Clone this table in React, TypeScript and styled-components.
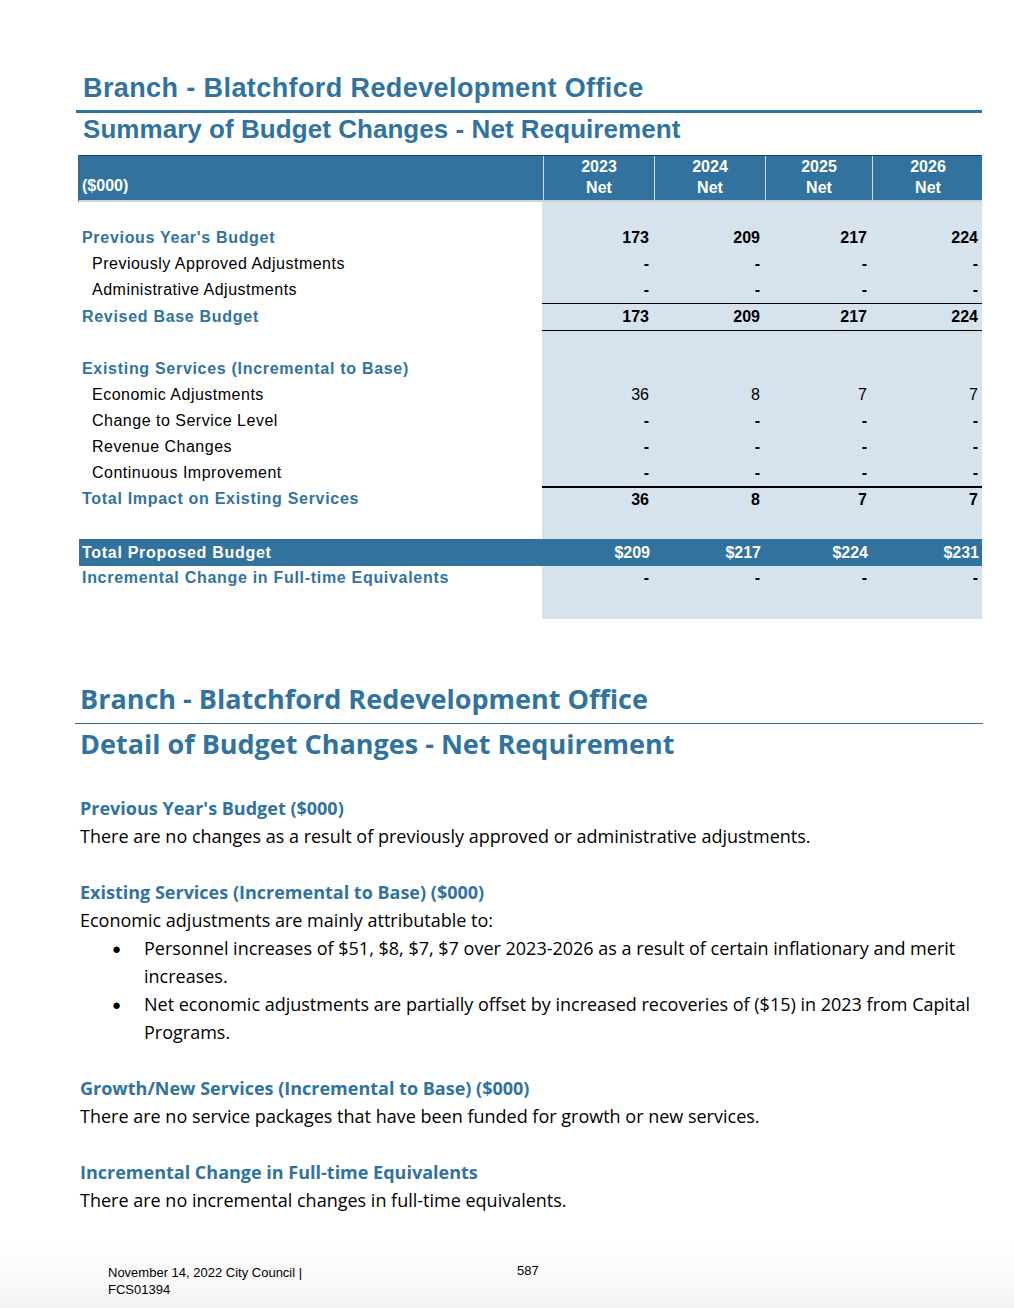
import React from 'react';
import styled, { createGlobalStyle } from 'styled-components';

const BLUE = '#30739F';
const HEAD_BLUE = '#31739E';
const LIGHT = '#D6E2EC';

const GlobalStyle = createGlobalStyle`
  html, body { margin: 0; padding: 0; background: #ffffff; }
  #root { width: 1014px; }
`;

const Page = styled.div`
  width: 1014px;
  min-height: 1308px;
  display: flex;
  flex-direction: column;
  background: #fff;
`;

/* ---------- Summary (Arial-like) ---------- */
const Summary = styled.section`
  margin: 71px 32px 0 76px;
  font-family: "Liberation Sans", Arial, sans-serif;
`;

const SumTitle = styled.h1`
  margin: 0;
  padding-left: 7px;
  font-size: 27px;
  line-height: 34px;
  font-weight: 700;
  letter-spacing: 0.4px;
  color: ${BLUE};
`;

const ThickRule = styled.div`
  height: 3px;
  background: ${BLUE};
  margin-top: 5px;
`;

const SumSubtitle = styled.h2`
  margin: 0;
  padding-left: 7px;
  font-size: 26px;
  line-height: 32px;
  font-weight: 700;
  letter-spacing: 0.05px;
  color: ${BLUE};
`;

const Table = styled.div`
  margin: 10px 0 0 2px;
  width: 904px;
`;

const COLS = '464px 111px 111px 107px 111px';

const HeaderRow = styled.div`
  display: grid;
  grid-template-columns: ${COLS};
  height: 44px;
  background: ${HEAD_BLUE};
  border-top: 1px solid #1c3f5c;
  border-left: 1px solid #3a5f7c;
  border-bottom: 2px solid #cdd3d8;
  color: #fff;
  font-weight: 700;
  font-size: 16px;
`;

const HeadLabel = styled.div`
  display: flex;
  align-items: flex-end;
  padding: 0 0 5px 3px;
  line-height: 18px;
`;

const HeadYear = styled.div`
  display: flex;
  flex-direction: column;
  align-items: center;
  justify-content: flex-start;
  border-left: 1px solid #cfdde8;
  line-height: 21px;
`;

const Row = styled.div<{ $h: number }>`
  display: grid;
  grid-template-columns: ${COLS};
  height: ${p => p.$h}px;
`;

const Label = styled.div<{ $kind: 'head' | 'item' | 'none'; $top?: boolean }>`
  display: flex;
  align-items: ${p => (p.$top ? 'flex-start' : 'center')};
  padding-left: ${p => (p.$kind === 'item' ? 14 : 4)}px;
  padding-top: ${p => (p.$top ? 3 : 0)}px;
  font-size: 16px;
  font-weight: ${p => (p.$kind === 'head' ? 700 : 400)};
  color: ${p => (p.$kind === 'head' ? BLUE : '#000')};
  letter-spacing: ${p => (p.$kind === 'head' ? '0.7px' : '0.5px')};
  white-space: nowrap;
`;

const Value = styled.div<{ $bold?: boolean; $top?: number; $bottom?: number; $alignTop?: boolean }>`
  display: flex;
  align-items: ${p => (p.$alignTop ? 'flex-start' : 'center')};
  justify-content: flex-end;
  padding-right: 4px;
  padding-top: ${p => (p.$alignTop ? 3 : 0)}px;
  background: ${LIGHT};
  font-size: 16px;
  font-weight: ${p => (p.$bold ? 700 : 400)};
  color: #000;
  border-top: ${p => (p.$top ? `${p.$top}px solid #000` : 'none')};
  border-bottom: ${p => (p.$bottom ? `${p.$bottom}px solid #000` : 'none')};
`;

const TotalRow = styled.div`
  display: grid;
  grid-template-columns: ${COLS};
  height: 27px;
  background: ${HEAD_BLUE};
  color: #fff;
  font-size: 16px;
  font-weight: 700;
  margin-left: 1px;
`;

const TotalLabel = styled.div`
  display: flex;
  align-items: center;
  padding-left: 3px;
  letter-spacing: 0.7px;
`;

const TotalValue = styled.div`
  display: flex;
  align-items: center;
  justify-content: flex-end;
  padding-right: 4px;
`;

/* ---------- Detail (Open Sans) ---------- */
const Detail = styled.section`
  margin: 62px 31px 0 75px;
  font-family: "Open Sans", "Noto Sans", sans-serif;
`;

const DetailTitle = styled.h1`
  margin: 0;
  padding-left: 5px;
  font-size: 27px;
  line-height: 36px;
  font-weight: 700;
  color: ${BLUE};
`;

const ThinRule = styled.div`
  height: 1px;
  background: ${BLUE};
  margin-top: 6px;
`;

const DetailSub = styled.h2`
  margin: 0;
  padding-left: 5px;
  font-size: 27px;
  line-height: 40px;
  font-weight: 700;
  color: ${BLUE};
`;

const Block = styled.div<{ $gap: number }>`
  margin-top: ${p => p.$gap}px;
  padding-left: 5px;
`;

const BlockHead = styled.h3`
  margin: 0;
  font-size: 18px;
  line-height: 28px;
  font-weight: 700;
  color: ${BLUE};
`;

const Para = styled.p`
  margin: 0;
  font-size: 18px;
  line-height: 28px;
  color: #000;
`;

const Bullets = styled.ul`
  margin: 0;
  padding: 0;
  list-style: none;
`;

const Bullet = styled.li`
  display: flex;
  font-size: 18px;
  line-height: 28px;
  color: #000;
  &::before {
    content: '●';
    flex: 0 0 64px;
    font-size: 15px;
    padding-left: 32px;
    box-sizing: border-box;
  }
`;

/* ---------- Footer ---------- */
const Footer = styled.footer`
  margin-top: auto;
  height: 70px;
  display: flex;
  padding: 0 0 0 108px;
  font-family: "Liberation Sans", Arial, sans-serif;
  font-size: 13px;
  line-height: 17px;
  color: #000;
  background: linear-gradient(to bottom, #ffffff 0%, #fbfbfb 50%, #f3f3f3 100%);
`;

const FooterLeft = styled.div`
  width: 409px;
  padding-top: 26px;
`;

const FooterPage = styled.div`
  padding-top: 24px;
`;

type R = { label: string; kind: 'head' | 'item'; vals: string[]; bold?: boolean; top?: number; bottom?: number };

const D = '-';

const App: React.FC = () => {
  const block1: R[] = [
    { label: "Previous Year's Budget", kind: 'head', vals: ['173', '209', '217', '224'], bold: true },
    { label: 'Previously Approved Adjustments', kind: 'item', vals: [D, D, D, D], bold: true },
    { label: 'Administrative Adjustments', kind: 'item', vals: [D, D, D, D], bold: true },
    { label: 'Revised Base Budget', kind: 'head', vals: ['173', '209', '217', '224'], bold: true, top: 1, bottom: 1 },
  ];
  const block2: R[] = [
    { label: 'Economic Adjustments', kind: 'item', vals: ['36', '8', '7', '7'] },
    { label: 'Change to Service Level', kind: 'item', vals: [D, D, D, D], bold: true },
    { label: 'Revenue Changes', kind: 'item', vals: [D, D, D, D], bold: true },
    { label: 'Continuous Improvement', kind: 'item', vals: [D, D, D, D], bold: true },
  ];

  const renderRow = (r: R, h = 26) => (
    <Row $h={h} key={r.label}>
      <Label $kind={r.kind}>{r.label}</Label>
      {r.vals.map((v, i) => (
        <Value key={i} $bold={r.bold} $top={r.top} $bottom={r.bottom}>
          {v}
        </Value>
      ))}
    </Row>
  );

  const blank = (h: number, k: string) => (
    <Row $h={h} key={k}>
      <Label $kind="none" />
      <Value />
      <Value />
      <Value />
      <Value />
    </Row>
  );

  return (
    <Page>
      <GlobalStyle />
      <Summary>
        <SumTitle>Branch - Blatchford Redevelopment Office</SumTitle>
        <ThickRule />
        <SumSubtitle>Summary of Budget Changes - Net Requirement</SumSubtitle>
        <Table>
          <HeaderRow>
            <HeadLabel>($000)</HeadLabel>
            {['2023', '2024', '2025', '2026'].map(y => (
              <HeadYear key={y}>
                <span>{y}</span>
                <span>Net</span>
              </HeadYear>
            ))}
          </HeaderRow>
          {blank(23, 'b0')}
          {block1.map(r => renderRow(r, r.top ? 28 : 26))}
          {blank(25, 'b1')}
          {renderRow({ label: 'Existing Services (Incremental to Base)', kind: 'head', vals: ['', '', '', ''] })}
          {block2.map(r => renderRow(r))}
          <Row $h={26}>
            <Label $kind="head">Total Impact on Existing Services</Label>
            {['36', '8', '7', '7'].map((v, i) => (
              <Value key={i} $bold $top={2}>
                {v}
              </Value>
            ))}
          </Row>
          {blank(27, 'b2')}
          <TotalRow>
            <TotalLabel>Total Proposed Budget</TotalLabel>
            {['$209', '$217', '$224', '$231'].map(v => (
              <TotalValue key={v}>{v}</TotalValue>
            ))}
          </TotalRow>
          <Row $h={53}>
            <Label $kind="head" $top>
              Incremental Change in Full-time Equivalents
            </Label>
            {[0, 1, 2, 3].map(i => (
              <Value key={i} $bold $alignTop>
                {D}
              </Value>
            ))}
          </Row>
        </Table>
      </Summary>

      <Detail>
        <DetailTitle>Branch - Blatchford Redevelopment Office</DetailTitle>
        <ThinRule />
        <DetailSub>Detail of Budget Changes - Net Requirement</DetailSub>

        <Block $gap={30}>
          <BlockHead>Previous Year's Budget ($000)</BlockHead>
          <Para>There are no changes as a result of previously approved or administrative adjustments.</Para>
        </Block>

        <Block $gap={28}>
          <BlockHead>Existing Services (Incremental to Base) ($000)</BlockHead>
          <Para>Economic adjustments are mainly attributable to:</Para>
          <Bullets>
            <Bullet>
              <span>
                Personnel increases of $51, $8, $7, $7 over 2023-2026 as a result of certain inflationary and merit
                increases.
              </span>
            </Bullet>
            <Bullet>
              <span>
                Net economic adjustments are partially offset by increased recoveries of ($15) in 2023 from Capital
                Programs.
              </span>
            </Bullet>
          </Bullets>
        </Block>

        <Block $gap={28}>
          <BlockHead>Growth/New Services (Incremental to Base) ($000)</BlockHead>
          <Para>There are no service packages that have been funded for growth or new services.</Para>
        </Block>

        <Block $gap={28}>
          <BlockHead>Incremental Change in Full-time Equivalents</BlockHead>
          <Para>There are no incremental changes in full-time equivalents.</Para>
        </Block>
      </Detail>

      <Footer>
        <FooterLeft>
          November 14, 2022 City Council |
          <br />
          FCS01394
        </FooterLeft>
        <FooterPage>587</FooterPage>
      </Footer>
    </Page>
  );
};

export default App;
